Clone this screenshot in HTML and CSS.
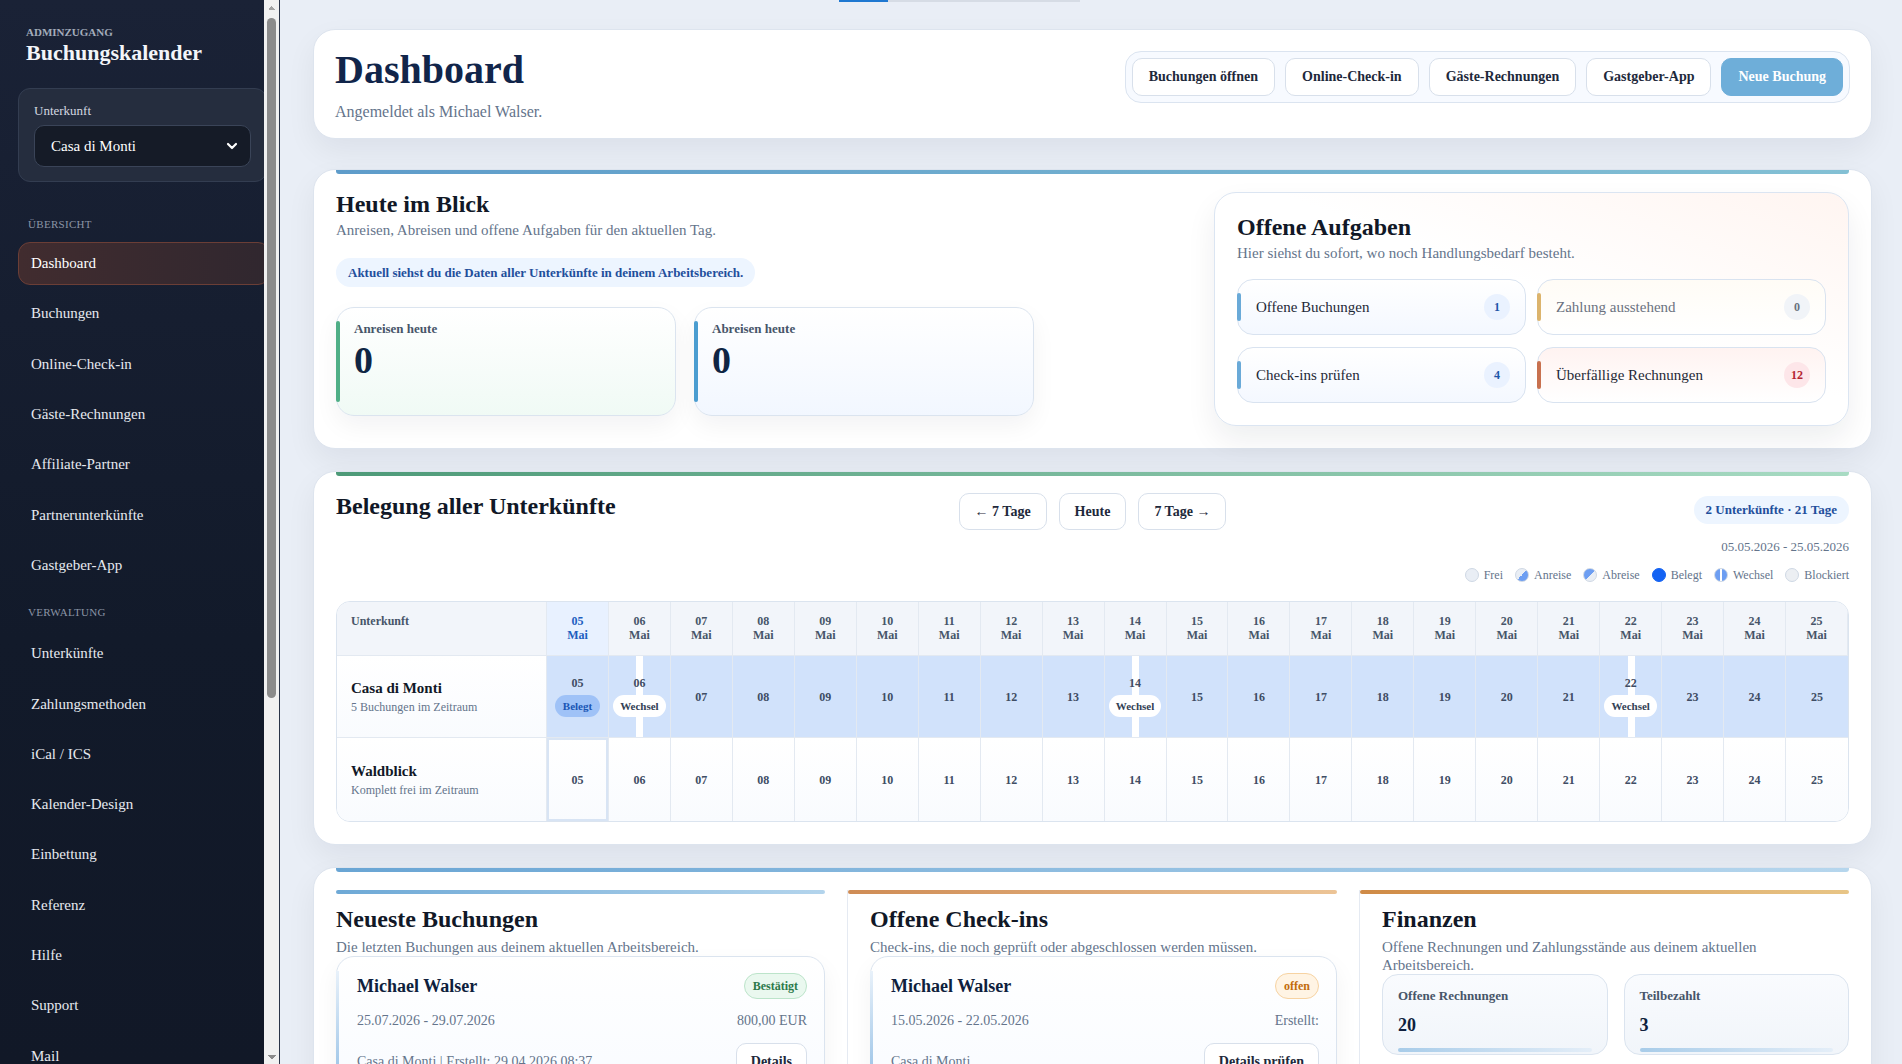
FILE: index.html
```html
<!DOCTYPE html>
<html lang="de">
<head>
  <meta charset="UTF-8" />
  <meta name="viewport" content="width=device-width, initial-scale=1.0"/>
  <title>Buchungskalender – Dashboard</title>
  <link rel="stylesheet" href="styles.css">
</head>
<body>
<div class="app">

  <aside class="sidebar">
    <div class="side-inner">
      <div class="brand">
        <div class="brand-kicker">Adminzugang</div>
        <div class="brand-title">Buchungskalender</div>
      </div>

      <div class="place-box">
        <div class="place-label">Unterkunft</div>
        <div class="place-select">
          <span>Casa di Monti</span>
          <svg width="12" height="12" viewBox="0 0 12 12"><polyline points="2,4 6,8 10,4" fill="none" stroke="#fff" stroke-width="2.2" stroke-linecap="round" stroke-linejoin="round"/></svg>
        </div>
      </div>

      <nav class="nav">
        <div class="nav-label">Übersicht</div>
        <a class="nav-item active">Dashboard</a>
        <a class="nav-item">Buchungen</a>
        <a class="nav-item">Online-Check-in</a>
        <a class="nav-item">Gäste-Rechnungen</a>
        <a class="nav-item">Affiliate-Partner</a>
        <a class="nav-item">Partnerunterkünfte</a>
        <a class="nav-item">Gastgeber-App</a>
        <div class="nav-label">Verwaltung</div>
        <a class="nav-item">Unterkünfte</a>
        <a class="nav-item">Zahlungsmethoden</a>
        <a class="nav-item">iCal / ICS</a>
        <a class="nav-item">Kalender-Design</a>
        <a class="nav-item">Einbettung</a>
        <a class="nav-item">Referenz</a>
        <a class="nav-item">Hilfe</a>
        <a class="nav-item">Support</a>
        <a class="nav-item">Mail</a>
        <a class="nav-item">Vorlagen</a>
        <a class="nav-item">Statistiken</a>
      </nav>
    </div>

    <!-- Scrollleiste der Navigation -->
    <div class="rail">
      <span class="rail-btn rail-up"></span>
      <span class="rail-thumb"></span>
      <span class="rail-btn rail-down"></span>
    </div>
  </aside>

  <main class="main">
    <div class="topline"></div>

    <header class="page-head">
      <div>
        <h1>Dashboard</h1>
        <p class="page-sub">Angemeldet als Michael Walser.</p>
      </div>
      <div class="quick">
        <button class="btn">Buchungen öffnen</button>
        <button class="btn">Online-Check-in</button>
        <button class="btn">Gäste-Rechnungen</button>
        <button class="btn">Gastgeber-App</button>
        <button class="btn btn-primary">Neue Buchung</button>
      </div>
    </header>

    <!-- Heute im Blick -->
    <section class="card card-today">
      <div class="today-left">
        <h2>Heute im Blick</h2>
        <p class="sub">Anreisen, Abreisen und offene Aufgaben für den aktuellen Tag.</p>
        <div class="info-pill">Aktuell siehst du die Daten aller Unterkünfte in deinem Arbeitsbereich.</div>
        <div class="stat-grid">
          <div class="stat stat-in">
            <div class="stat-label">Anreisen heute</div>
            <div class="stat-value">0</div>
          </div>
          <div class="stat stat-out">
            <div class="stat-label">Abreisen heute</div>
            <div class="stat-value">0</div>
          </div>
        </div>
      </div>

      <div class="tasks">
        <h2>Offene Aufgaben</h2>
        <p class="sub">Hier siehst du sofort, wo noch Handlungsbedarf besteht.</p>
        <div class="task-grid">
          <div class="task"><span>Offene Buchungen</span><span class="count">1</span></div>
          <div class="task task-muted"><span>Zahlung ausstehend</span><span class="count">0</span></div>
          <div class="task"><span>Check-ins prüfen</span><span class="count">4</span></div>
          <div class="task task-alert"><span>Überfällige Rechnungen</span><span class="count">12</span></div>
        </div>
      </div>
    </section>

    <!-- Belegung -->
    <section class="card card-occ">
      <div class="occ-head">
        <h2>Belegung aller Unterkünfte</h2>
        <div class="occ-nav">
          <button class="btn btn-sm">← 7 Tage</button>
          <button class="btn btn-sm">Heute</button>
          <button class="btn btn-sm">7 Tage →</button>
        </div>
        <div class="occ-range">
          <span class="range-pill">2 Unterkünfte · 21 Tage</span>
          <span class="range-date">05.05.2026 - 25.05.2026</span>
          <div class="legend">
            <span><i class="dot dot-free"></i>Frei</span>
            <span><i class="dot dot-in"></i>Anreise</span>
            <span><i class="dot dot-out"></i>Abreise</span>
            <span><i class="dot dot-busy"></i>Belegt</span>
            <span><i class="dot dot-change"></i>Wechsel</span>
            <span><i class="dot dot-block"></i>Blockiert</span>
          </div>
        </div>
      </div>

      <div class="occ">
        <div class="oh oh-first">Unterkunft</div>
        <div class="oh oh-today">05<br>Mai</div>
        <div class="oh">06<br>Mai</div>
        <div class="oh">07<br>Mai</div>
        <div class="oh">08<br>Mai</div>
        <div class="oh">09<br>Mai</div>
        <div class="oh">10<br>Mai</div>
        <div class="oh">11<br>Mai</div>
        <div class="oh">12<br>Mai</div>
        <div class="oh">13<br>Mai</div>
        <div class="oh">14<br>Mai</div>
        <div class="oh">15<br>Mai</div>
        <div class="oh">16<br>Mai</div>
        <div class="oh">17<br>Mai</div>
        <div class="oh">18<br>Mai</div>
        <div class="oh">19<br>Mai</div>
        <div class="oh">20<br>Mai</div>
        <div class="oh">21<br>Mai</div>
        <div class="oh">22<br>Mai</div>
        <div class="oh">23<br>Mai</div>
        <div class="oh">24<br>Mai</div>
        <div class="oh">25<br>Mai</div>

        <div class="ol">
          <strong>Casa di Monti</strong>
          <small>5 Buchungen im Zeitraum</small>
        </div>
        <div class="od busy"><span>05</span><span class="tag tag-busy">Belegt</span></div>
        <div class="od busy change"><span>06</span><span class="tag">Wechsel</span></div>
        <div class="od busy"><span>07</span></div>
        <div class="od busy"><span>08</span></div>
        <div class="od busy"><span>09</span></div>
        <div class="od busy"><span>10</span></div>
        <div class="od busy"><span>11</span></div>
        <div class="od busy"><span>12</span></div>
        <div class="od busy"><span>13</span></div>
        <div class="od busy change"><span>14</span><span class="tag">Wechsel</span></div>
        <div class="od busy"><span>15</span></div>
        <div class="od busy"><span>16</span></div>
        <div class="od busy"><span>17</span></div>
        <div class="od busy"><span>18</span></div>
        <div class="od busy"><span>19</span></div>
        <div class="od busy"><span>20</span></div>
        <div class="od busy"><span>21</span></div>
        <div class="od busy change"><span>22</span><span class="tag">Wechsel</span></div>
        <div class="od busy"><span>23</span></div>
        <div class="od busy"><span>24</span></div>
        <div class="od busy"><span>25</span></div>

        <div class="ol ol-last">
          <strong>Waldblick</strong>
          <small>Komplett frei im Zeitraum</small>
        </div>
        <div class="od free today"><span>05</span></div>
        <div class="od free"><span>06</span></div>
        <div class="od free"><span>07</span></div>
        <div class="od free"><span>08</span></div>
        <div class="od free"><span>09</span></div>
        <div class="od free"><span>10</span></div>
        <div class="od free"><span>11</span></div>
        <div class="od free"><span>12</span></div>
        <div class="od free"><span>13</span></div>
        <div class="od free"><span>14</span></div>
        <div class="od free"><span>15</span></div>
        <div class="od free"><span>16</span></div>
        <div class="od free"><span>17</span></div>
        <div class="od free"><span>18</span></div>
        <div class="od free"><span>19</span></div>
        <div class="od free"><span>20</span></div>
        <div class="od free"><span>21</span></div>
        <div class="od free"><span>22</span></div>
        <div class="od free"><span>23</span></div>
        <div class="od free"><span>24</span></div>
        <div class="od free"><span>25</span></div>
      </div>
    </section>

    <!-- Listen -->
    <section class="card card-lists">
      <div class="col">
        <div class="col-bar bar-blue"></div>
        <div class="col-body">
          <h2>Neueste Buchungen</h2>
          <p class="sub">Die letzten Buchungen aus deinem aktuellen Arbeitsbereich.</p>
          <div class="entry">
            <div class="entry-top">
              <span class="entry-name">Michael Walser</span>
              <span class="status status-ok">Bestätigt</span>
            </div>
            <div class="entry-row">
              <span>25.07.2026 - 29.07.2026</span>
              <span>800,00 EUR</span>
            </div>
            <div class="entry-row entry-foot">
              <span>Casa di Monti | Erstellt: 29.04.2026 08:37</span>
              <button class="btn btn-sm">Details</button>
            </div>
          </div>
        </div>
      </div>

      <div class="col col-split">
        <div class="col-bar bar-copper"></div>
        <div class="col-body">
          <h2>Offene Check-ins</h2>
          <p class="sub">Check-ins, die noch geprüft oder abgeschlossen werden müssen.</p>
          <div class="entry">
            <div class="entry-top">
              <span class="entry-name">Michael Walser</span>
              <span class="status status-open">offen</span>
            </div>
            <div class="entry-row">
              <span>15.05.2026 - 22.05.2026</span>
              <span>Erstellt:</span>
            </div>
            <div class="entry-row entry-foot">
              <span>Casa di Monti</span>
              <button class="btn btn-sm">Details prüfen</button>
            </div>
          </div>
        </div>
      </div>

      <div class="col col-split">
        <div class="col-bar bar-gold"></div>
        <div class="col-body">
          <h2>Finanzen</h2>
          <p class="sub">Offene Rechnungen und Zahlungsstände aus deinem aktuellen Arbeitsbereich.</p>
          <div class="fin-grid">
            <div class="fin">
              <div class="fin-label">Offene Rechnungen</div>
              <div class="fin-value">20</div>
              <div class="fin-bar"></div>
            </div>
            <div class="fin">
              <div class="fin-label">Teilbezahlt</div>
              <div class="fin-value">3</div>
              <div class="fin-bar"></div>
            </div>
          </div>
        </div>
      </div>
    </section>
  </main>
</div>
</body>
</html>
```

FILE: styles.css
```css
* {
  box-sizing: border-box;
}

body {
  margin: 0;
  font-family: "Liberation Serif", "Times New Roman", serif;
  background: #e9eef6;
  color: #1f2937;
}

.app {
  display: flex;
  height: 100vh;
  overflow: hidden;
}

/* ---------- sidebar ---------- */

.sidebar {
  width: 280px;
  flex: none;
  height: 100vh;
  display: flex;
  overflow: hidden;
  background: linear-gradient(180deg, #1a2236 0%, #121a2a 60%, #111827 100%);
  border-right: 1px solid #2a3448;
}

.side-inner {
  flex: 1;
  min-width: 0;
  overflow: hidden;
  padding: 26px 0 40px 18px;
}

.rail {
  width: 15px;
  flex: none;
  display: flex;
  flex-direction: column;
  background: #f1f1f1;
}

.rail-btn {
  height: 15px;
  flex: none;
}

.rail-up {
  background: conic-gradient(from 135deg at 50% 0%, #a3a3a3 0deg 90deg, transparent 90deg) center / 8px 4px no-repeat;
}

.rail-down {
  margin-top: auto;
  background: conic-gradient(from -45deg at 50% 100%, #8b8b8b 0deg 90deg, transparent 90deg) center / 8px 4px no-repeat;
}

.rail-thumb {
  height: 680px;
  margin: 3px 3px 0;
  border-radius: 5px;
  background: #8b8b8b;
}

.brand {
  padding-left: 8px;
}

.brand-kicker {
  font-size: 11px;
  line-height: 13px;
  font-weight: bold;
  text-transform: uppercase;
  color: #a3acbb;
}

.brand-title {
  margin-top: 1px;
  font-size: 22px;
  line-height: 26px;
  font-weight: bold;
  color: #f3f5f9;
}

.place-box {
  margin-top: 22px;
  width: 249px;
  padding: 14px 15px;
  background: #252d3e;
  border: 1px solid #333d51;
  border-radius: 12px;
}

.place-label {
  font-size: 13px;
  line-height: 16px;
  color: #d3d8e0;
}

.place-select {
  margin-top: 6px;
  height: 42px;
  display: flex;
  align-items: center;
  justify-content: space-between;
  padding: 0 12px 0 16px;
  background: #151b27;
  border: 1px solid #3a4458;
  border-radius: 10px;
  font-size: 15px;
  color: #fff;
}

.nav {
  margin-top: 35px;
  display: flex;
  flex-direction: column;
  gap: 7px;
}

.nav-label {
  padding-left: 10px;
  margin: 11px 0 6px;
  font-size: 11px;
  line-height: 14px;
  text-transform: uppercase;
  letter-spacing: 0.3px;
  color: #8b95a6;
}

.nav-label:first-child {
  margin-top: 0;
  margin-bottom: 4px;
}

.nav-item {
  width: 252px;
  height: 43.3px;
  flex: none;
  display: flex;
  align-items: center;
  padding: 0 12px;
  border: 1px solid transparent;
  border-radius: 12px;
  font-size: 15px;
  color: #e6e9ef;
  cursor: pointer;
}

.nav-item.active {
  background: linear-gradient(90deg, #412c2f, #30272f);
  border-color: #6b3e36;
  color: #fff;
}

/* ---------- main ---------- */

.main {
  flex: 1;
  min-width: 0;
  height: 100vh;
  overflow: hidden;
  padding: 0 30px 30px 33px;
}

.topline {
  width: 241px;
  height: 2px;
  margin-left: 526px;
  background: linear-gradient(90deg, #1f78d1 0 49px, #d6dce5 49px);
}

h1, h2, p {
  margin: 0;
}

.page-head {
  margin-top: 27px;
  display: flex;
  justify-content: space-between;
  align-items: flex-start;
  padding: 21px 21px 17px;
  background: #fff;
  border: 1px solid #dde4ee;
  border-radius: 22px;
  box-shadow: 0 12px 30px rgba(15, 23, 42, 0.06);
}

h1 {
  font-size: 40px;
  line-height: 38px;
  color: #11254a;
}

.page-sub {
  margin-top: 14px;
  font-size: 16px;
  line-height: 18px;
  color: #64748b;
}

.quick {
  display: flex;
  gap: 10px;
  padding: 6px;
  background: #f7faff;
  border: 1px solid #dbe4f0;
  border-radius: 16px;
}

.btn {
  height: 38px;
  padding: 0 16px;
  font-family: inherit;
  font-size: 14px;
  font-weight: bold;
  color: #1e293b;
  background: #fff;
  border: 1px solid #d8e0eb;
  border-radius: 10px;
  cursor: pointer;
}

.btn-primary {
  background: #6eaed9;
  border-color: #6eaed9;
  color: #fff;
}

.btn-sm {
  height: 37px;
  padding: 0 14px;
}

.card {
  position: relative;
  margin-top: 22px;
  padding: 22px;
  background: #fff;
  border: 1px solid #dde4ee;
  border-radius: 22px;
  box-shadow: 0 12px 30px rgba(15, 23, 42, 0.06);
}

.card::before {
  content: "";
  position: absolute;
  top: 0;
  left: 22px;
  right: 22px;
  height: 4px;
  border-radius: 0 0 3px 3px;
  background: linear-gradient(90deg, #5e9cca, #83c0d4);
}

.page-head + .card {
  margin-top: 30px;
}

h2 {
  font-size: 24px;
  line-height: 24px;
  color: #111827;
}

.sub {
  font-size: 15px;
  line-height: 18px;
  color: #64748b;
}

/* ---------- heute im blick ---------- */

.card-today {
  display: grid;
  grid-template-columns: minmax(0, 1fr) 635px;
  gap: 24px;
  align-items: start;
}

.today-left .sub {
  margin-top: 5px;
}

.info-pill {
  display: inline-block;
  margin-top: 19px;
  height: 29px;
  line-height: 29px;
  padding: 0 12px;
  background: #edf5ff;
  border-radius: 999px;
  font-size: 13px;
  font-weight: bold;
  color: #1f4f9c;
}

.stat-grid {
  margin-top: 20px;
  display: grid;
  grid-template-columns: 340px 340px;
  gap: 18px;
}

.stat {
  position: relative;
  height: 109px;
  padding: 13px 17px;
  border: 1px solid #dbe4ef;
  border-radius: 18px;
  box-shadow: 0 10px 24px rgba(15, 23, 42, 0.05);
}

.stat::before {
  content: "";
  position: absolute;
  left: -1px;
  top: 13px;
  bottom: 13px;
  width: 4px;
  border-radius: 2px;
}

.stat-in {
  background: linear-gradient(180deg, #ffffff, #f0faf5);
}

.stat-in::before {
  background: #4fae86;
}

.stat-out {
  background: linear-gradient(180deg, #ffffff, #f2f7ff);
}

.stat-out::before {
  background: #4b9dd0;
}

.stat-label {
  font-size: 13px;
  line-height: 16px;
  font-weight: bold;
  color: #475569;
}

.stat-value {
  margin-top: 4px;
  font-size: 38px;
  line-height: 38px;
  font-weight: bold;
  color: #0f2544;
}

.tasks {
  padding: 22px;
  background: linear-gradient(200deg, #fff5f1 0%, #ffffff 45%);
  border: 1px solid #dbe5f2;
  border-radius: 22px;
  box-shadow: 0 14px 30px rgba(15, 23, 42, 0.07);
}

.tasks .sub {
  margin-top: 5px;
}

.task-grid {
  margin-top: 17px;
  display: grid;
  grid-template-columns: 1fr 1fr;
  gap: 12px 11px;
}

.task {
  position: relative;
  height: 56px;
  display: flex;
  align-items: center;
  justify-content: space-between;
  padding: 0 15px 0 18px;
  background: linear-gradient(180deg, #ffffff, #f4f8ff);
  border: 1px solid #d9e3f0;
  border-radius: 16px;
  font-size: 15px;
  color: #1f2937;
}

.task::before {
  content: "";
  position: absolute;
  left: -1px;
  top: 13px;
  bottom: 13px;
  width: 4px;
  border-radius: 2px;
  background: #6aaad8;
}

.count {
  min-width: 26px;
  height: 26px;
  padding: 0 6px;
  display: grid;
  place-items: center;
  border-radius: 999px;
  background: #eaf2ff;
  font-size: 12px;
  font-weight: bold;
  color: #1e56a8;
}

.task-muted {
  background: linear-gradient(180deg, #fffcf6, #ffffff);
  color: #6b7280;
}

.task-muted::before {
  background: #dcb46d;
}

.task-muted .count {
  background: #f1f4f8;
  color: #6b7280;
}

.task-alert {
  background: linear-gradient(180deg, #fff3f1, #ffffff);
}

.task-alert::before {
  background: #c8714f;
}

.task-alert .count {
  background: #fde6e9;
  color: #b42332;
}

/* ---------- belegung ---------- */

.card-occ::before {
  background: linear-gradient(90deg, #4d9a78, #a8dbc3);
}

.occ-head {
  display: grid;
  grid-template-columns: 1fr auto 1fr;
  align-items: start;
}

.occ-nav {
  display: flex;
  gap: 12px;
  margin-top: -1px;
}

.occ-nav .btn-sm {
  padding: 0 15px;
}

.occ-range {
  justify-self: end;
  display: flex;
  flex-direction: column;
  align-items: flex-end;
}

.range-pill {
  margin-top: 2px;
  height: 28px;
  line-height: 28px;
  padding: 0 12px;
  border-radius: 999px;
  background: #edf5ff;
  font-size: 13px;
  font-weight: bold;
  color: #1f4f9c;
}

.range-date {
  margin-top: 15px;
  font-size: 13px;
  line-height: 16px;
  color: #64748b;
}

.legend {
  margin-top: 12px;
  display: flex;
  gap: 12px;
  font-size: 12px;
  line-height: 16px;
  color: #64748b;
}

.legend span {
  display: flex;
  align-items: center;
  gap: 5px;
}

.dot {
  width: 14px;
  height: 14px;
  border-radius: 50%;
  border: 1px solid #cfd8e4;
  background: #e9eef5;
}

.dot-in {
  background: linear-gradient(135deg, #e9eef5 50%, #6d9ef2 50%);
}

.dot-out {
  background: linear-gradient(135deg, #6d9ef2 50%, #e9eef5 50%);
}

.dot-busy {
  background: #1463f3;
  border-color: #1463f3;
}

.dot-change {
  background: linear-gradient(90deg, #6d9ef2 0 40%, #ffffff 40% 60%, #6d9ef2 60%);
}

.dot-block {
  background: #eceff3;
}

.occ {
  margin-top: 18px;
  display: grid;
  grid-template-columns: 210px repeat(21, 1fr);
  grid-template-rows: 54px 82px 83px;
  border: 1px solid #dbe4ef;
  border-radius: 14px;
  overflow: hidden;
}

.oh {
  padding-top: 12px;
  background: #f2f5fa;
  border-right: 1px solid #e3e9f1;
  border-bottom: 1px solid #e3e9f1;
  text-align: center;
  font-size: 12px;
  line-height: 14px;
  font-weight: bold;
  color: #475569;
}

.oh:last-child {
  border-right: 0;
}

.oh-first {
  padding-left: 14px;
  text-align: left;
}

.oh-today {
  background: #e8f1ff;
  color: #1d5fbf;
}

.ol {
  display: flex;
  flex-direction: column;
  justify-content: center;
  padding: 0 14px;
  background: linear-gradient(180deg, #ffffff, #f9fbfe);
  border-right: 1px solid #e3e9f1;
  border-bottom: 1px solid #e3e9f1;
}

.ol-last {
  border-bottom: 0;
}

.ol strong {
  font-size: 15px;
  line-height: 18px;
  color: #111827;
}

.ol small {
  margin-top: 3px;
  font-size: 12px;
  line-height: 15px;
  color: #64748b;
}

.od {
  position: relative;
  display: flex;
  flex-direction: column;
  align-items: center;
  justify-content: center;
  gap: 5px;
  border-right: 1px solid #e3e9f1;
  font-size: 12px;
  line-height: 14px;
  font-weight: bold;
  color: #3f4d64;
}

.od:nth-child(22n) {
  border-right: 0;
}

.od span {
  position: relative;
}

.busy {
  background: #d1e2fb;
  border-bottom: 1px solid #e3e9f1;
}

.free {
  background: linear-gradient(180deg, #ffffff, #f9fbfe);
}

.today {
  box-shadow: inset 0 0 0 2px #d8e4f4;
}

.change::before {
  content: "";
  position: absolute;
  top: 0;
  bottom: 0;
  left: 50%;
  width: 7px;
  margin-left: -3px;
  background: #fff;
}

.tag {
  height: 22px;
  line-height: 22px;
  padding: 0 7px;
  border-radius: 999px;
  background: #fff;
  font-size: 11px;
  color: #334155;
}

.tag-busy {
  padding: 0 8px;
  background: #9fc2f7;
  color: #1a56b5;
}

/* ---------- listen ---------- */

.card-lists {
  display: grid;
  grid-template-columns: repeat(3, 1fr);
  gap: 23px;
}

.card-lists::before {
  background: linear-gradient(90deg, #69a5d4, #b6d6ed);
}

.col-split {
  border-left: 1px solid #e5eaf2;
  margin-left: -1px;
}

.col-split .col-body {
  padding-left: 22px;
}

.col-bar {
  height: 4px;
  border-radius: 2px;
}

.bar-blue {
  background: linear-gradient(90deg, #6ea9d6, #b3d4ec);
}

.bar-copper {
  background: linear-gradient(90deg, #cf8c55, #ecc496);
}

.bar-gold {
  background: linear-gradient(90deg, #cf8a46, #e8c586);
}

.col-body h2 {
  margin-top: 13px;
}

.col-body .sub {
  margin-top: 7px;
}

.entry {
  position: relative;
  padding: 16px 17px 16px 20px;
  background: linear-gradient(180deg, #ffffff, #f8fbff);
  border: 1px solid #dbe4ef;
  border-radius: 18px;
  box-shadow: 0 10px 24px rgba(15, 23, 42, 0.05);
}

.entry::before {
  content: "";
  position: absolute;
  left: -1px;
  top: 14px;
  bottom: 0;
  width: 3px;
  background: linear-gradient(180deg, #e8f1fa, #8dbbe3);
}

.entry-top,
.entry-row {
  display: flex;
  justify-content: space-between;
  align-items: center;
}

.entry-name {
  font-size: 18px;
  line-height: 22px;
  font-weight: bold;
  color: #0f1f3d;
}

.status {
  height: 26px;
  line-height: 24px;
  padding: 0 8px;
  border-radius: 999px;
  border: 1px solid;
  font-size: 12px;
  font-weight: bold;
}

.status-ok {
  background: #eaf8ef;
  border-color: #bce4ca;
  color: #2d7a4b;
}

.status-open {
  background: #fff4e4;
  border-color: #f7d3a2;
  color: #c26b0a;
}

.entry-row {
  margin-top: 13px;
  font-size: 14px;
  line-height: 18px;
  color: #64748b;
}

.entry-foot {
  margin-top: 13px;
}

.fin-grid {
  display: grid;
  grid-template-columns: 1fr 1fr;
  gap: 16px;
}

.fin {
  padding: 13px 15px 2px;
  background: linear-gradient(180deg, #f9fbfe, #f1f5fa);
  border: 1px solid #dbe4ef;
  border-radius: 16px;
}

.fin-label {
  font-size: 13px;
  line-height: 16px;
  font-weight: bold;
  color: #475569;
}

.fin-value {
  margin-top: 10px;
  font-size: 18px;
  line-height: 22px;
  font-weight: bold;
  color: #0f1f3d;
}

.fin-bar {
  margin-top: 12px;
  height: 4px;
  border-radius: 2px;
  background: linear-gradient(90deg, #a8cce9, #e4eef8);
}
```
